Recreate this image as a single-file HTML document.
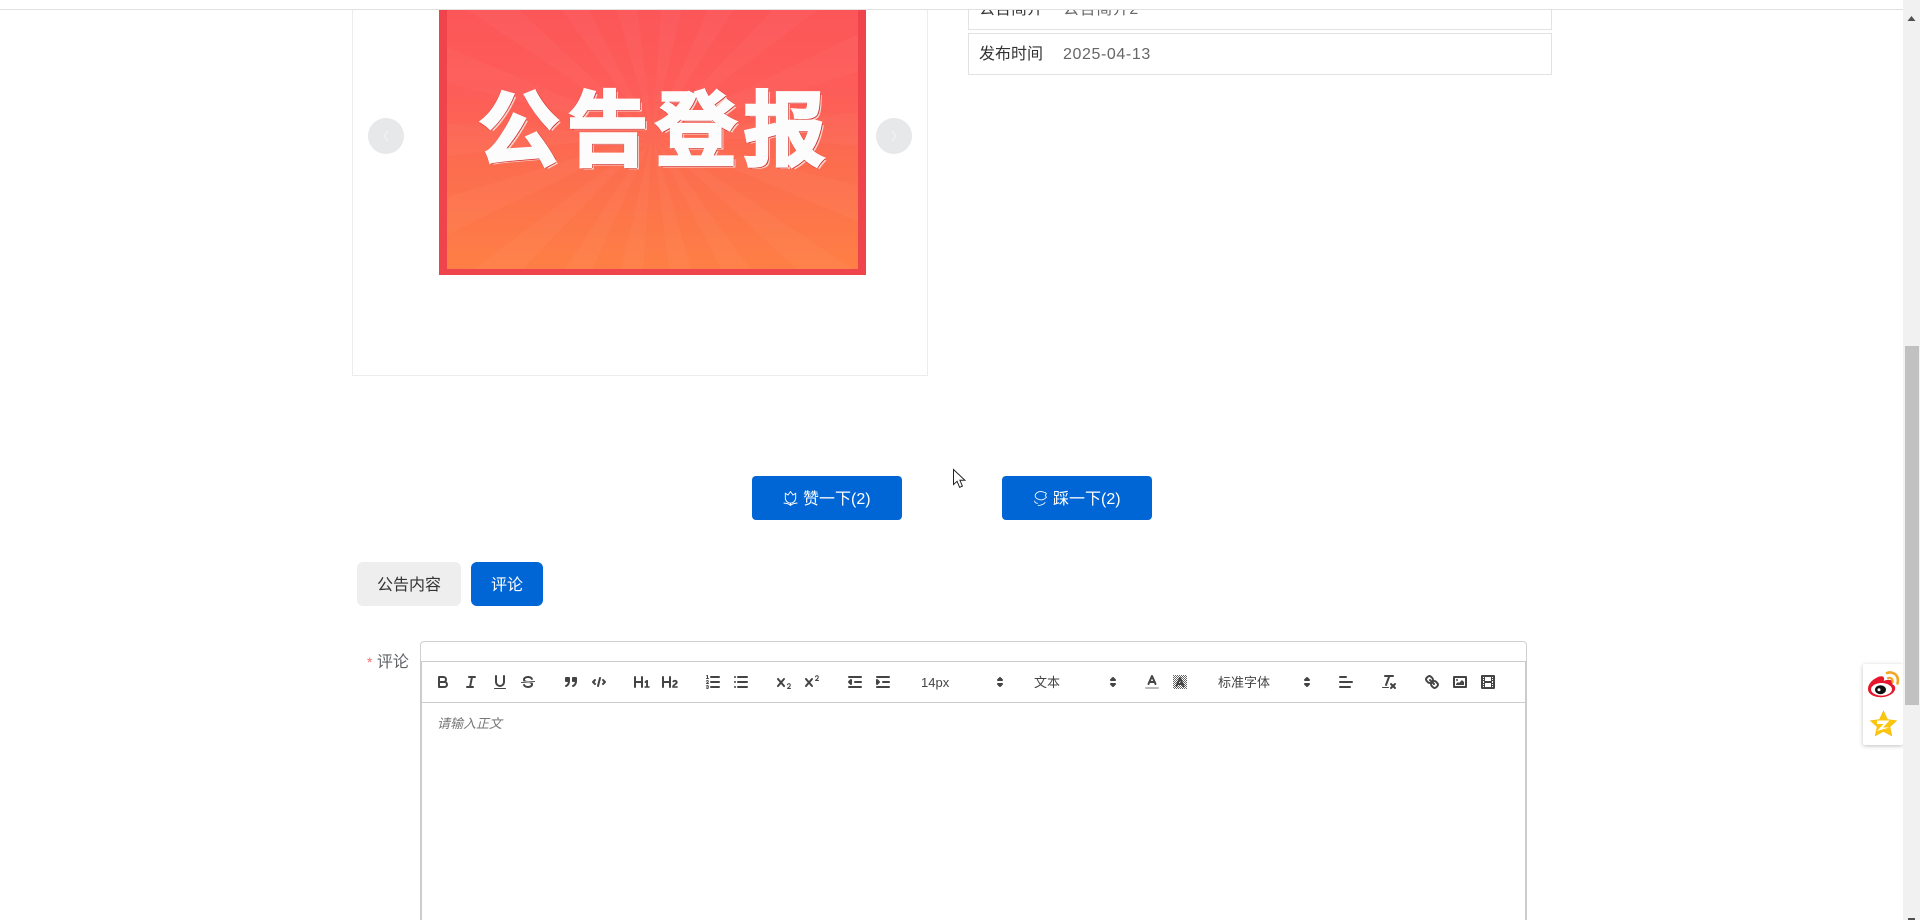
<!DOCTYPE html>
<html lang="zh-CN"><head><meta charset="utf-8"><title>公告详情</title>
<style>
html,body{margin:0;padding:0;width:1920px;height:920px;overflow:hidden;background:#fff;font-family:"Liberation Sans","Noto Sans CJK SC",sans-serif;color:#333}
#p{position:relative;width:1920px;height:920px;overflow:hidden;background:#fff}
.a{position:absolute;box-sizing:border-box}
.btn{background:#0066d6;border-radius:4px;color:#fff;font-size:16px;line-height:47px;height:44px;width:150px;top:476px}
.btn svg{position:absolute;left:31px;top:15px}
.btn span{position:absolute;left:51px;top:0;white-space:nowrap}
.row{left:968px;width:584px;border:1px solid #e2e2e2;font-size:16px;line-height:42px;height:42px}
.row b{position:absolute;left:10px;top:0;font-weight:400;color:#333}
.row i{position:absolute;left:94px;top:0;font-style:normal;color:#666;letter-spacing:.6px;white-space:nowrap}
.s{fill:none;stroke:#444;stroke-width:2;stroke-linecap:round;stroke-linejoin:round}
.t{fill:none;stroke:#444;stroke-width:1;stroke-linecap:round;stroke-linejoin:round}
.f{fill:#444}
.lb{font-size:13px;fill:#444;font-family:"Liberation Sans","Noto Sans CJK SC",sans-serif}
</style></head><body><div id="p">

<!-- carousel card -->
<div class="a" style="left:352px;top:-40px;width:576px;height:416px;border:1px solid #ececec"></div>
<div class="a" style="left:439px;top:0;width:427px;height:275px;background:#f0444c;overflow:hidden">
  <div class="a" style="left:8px;top:0;width:411px;height:269px;background:linear-gradient(180deg,#fc5559 0%,#fd5d58 35%,#fc6c4f 60%,#fe7f45 100%);overflow:hidden">
    <div class="a" style="left:-200px;top:-200px;width:811px;height:669px;background:repeating-conic-gradient(from 4deg at 50% 50%,rgba(255,255,255,.028) 0 9deg,rgba(255,255,255,0) 9deg 20deg)"></div>
  </div>
  <div class="a" style="left:39px;top:69px;width:370px;white-space:nowrap;font-family:'Noto Sans CJK SC','Liberation Sans',sans-serif;font-weight:700;font-size:82px;line-height:110px;letter-spacing:6.5px;color:#fcfcfc;-webkit-text-stroke:2.6px #fcfcfc;text-shadow:1px 1px 0 #d5302f,2px 1px 0 #d5302f,1px 2px 0 #d5302f,-1.5px -.5px 0 #d5302f,1.5px -1px 0 #d5302f,-1px 1.5px 0 #d5302f,3px 2.5px 0 #f8d5cb">公告登报</div>
</div>
<div class="a" style="left:368px;top:118px;width:36px;height:36px;border-radius:50%;background:#e6e8ea">
  <svg width="36" height="36" style="display:block"><path d="M20 13l-4 5 4 5" fill="none" stroke="#f2f3f4" stroke-width="1.2"/></svg></div>
<div class="a" style="left:876px;top:118px;width:36px;height:36px;border-radius:50%;background:#e6e8ea">
  <svg width="36" height="36" style="display:block"><path d="M16 13l4 5-4 5" fill="none" stroke="#f2f3f4" stroke-width="1.2"/></svg></div>

<!-- info rows -->
<div class="a row" style="top:-12px"><b>公告简介</b><i>公告简介2</i></div>
<div class="a row" style="top:33px;line-height:42.500px"><b>发布时间</b><i>2025-04-13</i></div>

<!-- top bar -->
<div class="a" style="left:0;top:0;width:1904px;height:10px;background:#fff;border-bottom:1px solid #e0e0e0"></div>

<!-- like buttons -->
<div class="a btn" style="left:752px"><svg width="15" height="15" viewBox="1 1 13 13" fill="none" stroke="#fff" stroke-width=".8"><path d="M3 3l2.300 1.500L7.500 1.500l2.200 3L12 3v4a4.500 4.500 0 0 1-9 0z"/><path d="M1.500 11.500c2.500 0 4.500.5 6 2 1.500-1.500 3.500-2 6-2M7.500 11.500v2"/></svg><span>赞一下(2)</span></div>
<div class="a btn" style="left:1002px"><svg width="15" height="15" viewBox="1.500 .500 12 14" fill="none" stroke="#fff" stroke-width=".8"><path d="M2.500 4.500C3 2.500 5 1 7.500 1c2.500 0 3.500 1 4.500 1l1 1-1 1.500 1 2-2 1.500c-1.500 1-4 1-6 0C3.500 7.500 2.500 6 2.500 4.500z"/><path d="M2 9.500c0 2 1.500 2.500 3 2.500M5 14c2 0 5-.5 7-3"/></svg><span>踩一下(2)</span></div>

<!-- tabs -->
<div class="a" style="left:357px;top:562px;width:104px;height:44px;border-radius:6px;background:#eee;font-size:16px;line-height:47px;text-align:center;color:#333">公告内容</div>
<div class="a" style="left:471px;top:562px;width:72px;height:44px;border-radius:6px;background:#0066d6;font-size:16px;line-height:47px;text-align:center;color:#fff">评论</div>

<!-- form label -->
<div class="a" style="left:367px;top:651px;font-size:16px;line-height:22px;color:#606266;white-space:nowrap"><span style="color:#f56c6c;font-size:14px">*</span> <span>评论</span></div>

<!-- editor -->
<div class="a" style="left:420px;top:641px;width:1107px;height:300px;border:1px solid #d0d0d0;border-radius:4px"></div>
<div class="a" style="left:420px;top:661px;width:1107px;height:300px;border:2px solid #ccc;border-top:1px solid #ccc"></div>
<div class="a" style="left:422px;top:702px;width:1103px;height:1px;background:#ccc"></div>
<div class="a" style="left:437px;top:715px;font-size:13px;line-height:18px;font-style:italic;color:#777;white-space:nowrap">请输入正文</div>

<svg class="a" style="left:0;top:0" width="1920" height="920" viewBox="0 0 1920 920">
<g transform="translate(434,673)"><path class="s" d="M5,4H9.5A2.5,2.5,0,0,1,12,6.5v0A2.5,2.5,0,0,1,9.5,9H5A0,0,0,0,1,5,9V4A0,0,0,0,1,5,4Z"/><path class="s" d="M5,9h5.5A2.5,2.5,0,0,1,13,11.5v0A2.5,2.5,0,0,1,10.5,14H5a0,0,0,0,1,0,0V9A0,0,0,0,1,5,9Z"/></g>
<g transform="translate(462,673)" class="s"><line x1="7" x2="13" y1="4" y2="4"/><line x1="5" x2="11" y1="14" y2="14"/><line x1="8" x2="10" y1="14" y2="4"/></g>
<g transform="translate(491,673)"><path class="s" d="M5,3V9a4.012,4.012,0,0,0,4,4H9a4.012,4.012,0,0,0,4-4V3"/><rect class="f" height="1" rx=".5" ry=".5" width="12" x="3" y="15"/></g>
<g transform="translate(519,673)"><line class="t" x1="15.5" x2="2.5" y1="8.5" y2="9.5"/><path class="f" d="M9.007,8C6.542,7.791,6,7.519,6,6.5,6,5.792,7.283,5,9,5c1.571,0,2.765.679,2.969,1.309a1,1,0,0,0,1.9-.617C13.356,4.106,11.354,3,9,3,6.2,3,4,4.538,4,6.5a3.2,3.2,0,0,0,.5,1.843Z"/><path class="f" d="M8.984,10C11.457,10.208,12,10.479,12,11.5c0,.708-1.283,1.5-3,1.5-1.571,0-2.765-.679-2.969-1.309a1,1,0,1,0-1.9.617C4.644,13.894,6.646,15,9,15c2.8,0,5-1.538,5-3.5a3.2,3.2,0,0,0-.5-1.843Z"/></g>
<g transform="translate(562,673)"><rect class="s" style="fill:#444" height="3" width="3" x="4" y="5"/><rect class="s" style="fill:#444" height="3" width="3" x="11" y="5"/><path class="s" d="M7,8c0,4.031-3,5-3,5"/><path class="s" d="M14,8c0,4.031-3,5-3,5"/></g>
<g transform="translate(590,673)" class="s"><polyline points="5 7 3 9 5 11"/><polyline points="13 7 15 9 13 11"/><line x1="10" x2="8" y1="5" y2="13"/></g>
<g transform="translate(633,673)"><path class="f" d="M10,4V14a1,1,0,0,1-2,0V10H3v4a1,1,0,0,1-2,0V4A1,1,0,0,1,3,4V8H8V4a1,1,0,0,1,2,0Zm6.06787,9.209H14.98975V7.59863a.54085.54085,0,0,0-.605-.54248h-.62744a1.01119,1.01119,0,0,0-.748.29688L11.645,8.56641a.5435.5435,0,0,0-.022.8584l.28613.30762a.53861.53861,0,0,0,.84717.0332l.09912-.08789a1.2137,1.2137,0,0,0,.2417-.35254h.02246s-.01123.30859-.01123.60547V13.209H12.041a.54085.54085,0,0,0-.605.54248v.43945a.54085.54085,0,0,0,.605.54248h4.02686a.54085.54085,0,0,0,.605-.54248v-.43945A.54085.54085,0,0,0,16.06787,13.209Z"/></g>
<g transform="translate(661,673)"><path class="f" d="M16.73975,13.81445v.43945a.54085.54085,0,0,1-.605.54248H11.855a.58392.58392,0,0,1-.64893-.60547V14.0127c0-2.90527,3.39941-3.42187,3.39941-4.55469a.77675.77675,0,0,0-.84717-.78125,1.17684,1.17684,0,0,0-.83594.38477c-.2749.26367-.561.374-.85791.13184l-.4292-.34082c-.30811-.24219-.38525-.51758-.1543-.81445a2.97155,2.97155,0,0,1,2.45361-1.17676,2.45393,2.45393,0,0,1,2.68408,2.40918c0,2.45312-3.1792,2.92676-3.27832,3.93848h2.79443A.54085.54085,0,0,1,16.73975,13.81445ZM9,3A.99974.99974,0,0,0,8,4V8H3V4A1,1,0,0,0,1,4V14a1,1,0,0,0,2,0V10H8v4a1,1,0,0,0,2,0V4A.99974.99974,0,0,0,9,3Z"/></g>
<g transform="translate(704,673)"><g class="s"><line x1="7" x2="15" y1="4" y2="4"/><line x1="7" x2="15" y1="9" y2="9"/><line x1="7" x2="15" y1="14" y2="14"/></g><line class="t" x1="2.5" x2="4.5" y1="5.5" y2="5.5"/><path class="f" d="M3.5,6A0.5,0.5,0,0,1,3,5.5V3.085l-0.276.138A0.5,0.5,0,0,1,2.053,3c-0.124-.247-0.023-0.324.224-0.447l1-.5A0.5,0.5,0,0,1,4,2.5v3A0.5,0.5,0,0,1,3.5,6Z"/><path class="t" d="M4.5,10.5h-2c0-.234,1.85-1.076,1.85-2.234A0.959,0.959,0,0,0,2.5,8.156"/><path class="t" d="M2.5,14.846a0.959,0.959,0,0,0,1.85-.109A0.7,0.7,0,0,0,3.75,14a0.688,0.688,0,0,0,.6-0.736,0.959,0.959,0,0,0-1.85-.109"/></g>
<g transform="translate(732,673)" class="s"><line x1="6" x2="15" y1="4" y2="4"/><line x1="6" x2="15" y1="9" y2="9"/><line x1="6" x2="15" y1="14" y2="14"/><line x1="3" x2="3" y1="4" y2="4"/><line x1="3" x2="3" y1="9" y2="9"/><line x1="3" x2="3" y1="14" y2="14"/></g>
<g transform="translate(775,673)" class="f"><path d="M15.5,15H13.861a3.858,3.858,0,0,0,1.914-2.975,1.8,1.8,0,0,0-1.6-1.751A1.921,1.921,0,0,0,12.021,11.7a0.50013,0.50013,0,1,0,.957.291h0a0.914,0.914,0,0,1,1.053-.725,0.81,0.81,0,0,1,.744.762c0,1.076-1.16971,1.86982-1.93971,2.43082A1.45639,1.45639,0,0,0,12,15.5a0.5,0.5,0,0,0,.5.5h3A0.5,0.5,0,0,0,15.5,15Z"/><path d="M9.65,5.241a1,1,0,0,0-1.409.108L6,7.964,3.759,5.349A1,1,0,0,0,2.192,6.59178Q2.21541,6.6213,2.241,6.649L4.684,9.5,2.241,12.35A1,1,0,0,0,3.71,13.70722q0.02557-.02768.049-0.05722L6,11.036,8.241,13.65a1,1,0,1,0,1.567-1.24277Q9.78459,12.3777,9.759,12.35L7.316,9.5,9.759,6.651A1,1,0,0,0,9.65,5.241Z"/></g>
<g transform="translate(803,673)" class="f"><path d="M15.5,7H13.861a4.015,4.015,0,0,0,1.914-2.975,1.8,1.8,0,0,0-1.6-1.751A1.922,1.922,0,0,0,12.021,3.7a0.5,0.5,0,1,0,.957.291,0.917,0.917,0,0,1,1.053-.725,0.81,0.81,0,0,1,.744.762c0,1.077-1.164,1.925-1.934,2.486A1.423,1.423,0,0,0,12,7.5a0.5,0.5,0,0,0,.5.5h3A0.5,0.5,0,0,0,15.5,7Z"/><path d="M9.651,5.241a1,1,0,0,0-1.41.108L6,7.964,3.759,5.349a1,1,0,1,0-1.519,1.3L4.683,9.5,2.241,12.35a1,1,0,1,0,1.519,1.3L6,11.036,8.241,13.65a1,1,0,0,0,1.519-1.3L7.317,9.5,9.759,6.651A1,1,0,0,0,9.651,5.241Z"/></g>
<g transform="translate(846,673)" class="s"><line x1="3" x2="15" y1="14" y2="14"/><line x1="3" x2="15" y1="4" y2="4"/><line x1="9" x2="15" y1="9" y2="9"/><polyline style="fill:#444" points="5 7 5 11 3 9 5 7"/></g>
<g transform="translate(874,673)" class="s"><line x1="3" x2="15" y1="14" y2="14"/><line x1="3" x2="15" y1="4" y2="4"/><line x1="9" x2="15" y1="9" y2="9"/><polyline style="fill:#444" points="3 7 3 11 5 9 3 7"/></g>
<text class="lb" x="921" y="687">14px</text>
<g transform="translate(991,673)" class="t" style="stroke-width:2"><polygon style="fill:#444" points="7 11 9 13 11 11 7 11"/><polygon style="fill:#444" points="7 7 9 5 11 7 7 7"/></g>
<text class="lb" x="1034" y="687">文本</text>
<g transform="translate(1104,673)" class="t" style="stroke-width:2"><polygon style="fill:#444" points="7 11 9 13 11 11 7 11"/><polygon style="fill:#444" points="7 7 9 5 11 7 7 7"/></g>
<g transform="translate(1143,673)"><line class="s" style="stroke:#bbb" x1="3" x2="15" y1="15" y2="15"/><polyline class="s" points="5.5 11 9 3 12.5 11"/><line class="s" x1="11.63" x2="6.38" y1="9" y2="9"/></g>
<defs><pattern id="dz" width="2" height="2" patternUnits="userSpaceOnUse"><rect width="1" height="1" fill="#333"/><rect x="1" y="1" width="1" height="1" fill="#333"/></pattern></defs>
<g transform="translate(1171,673)"><rect x="2" y="2" width="14" height="14" fill="url(#dz)" opacity=".75"/><polyline class="s" points="5.5 13 9 5 12.5 13"/><line class="s" x1="11.63" x2="6.38" y1="11" y2="11"/></g>
<text class="lb" x="1218" y="687">标准字体</text>
<g transform="translate(1298,673)" class="t" style="stroke-width:2"><polygon style="fill:#444" points="7 11 9 13 11 11 7 11"/><polygon style="fill:#444" points="7 7 9 5 11 7 7 7"/></g>
<g transform="translate(1337,673)" class="s"><line x1="3" x2="15" y1="9" y2="9"/><line x1="3" x2="13" y1="14" y2="14"/><line x1="3" x2="9" y1="4" y2="4"/></g>
<g transform="translate(1380,673)"><g class="s"><line x1="5" x2="13" y1="3" y2="3"/><line x1="6" x2="9.35" y1="12" y2="3"/><line x1="11" x2="15" y1="11" y2="15"/><line x1="15" x2="11" y1="11" y2="15"/></g><rect class="f" height="1" rx=".5" ry=".5" width="7" x="2" y="14"/></g>
<g transform="translate(1423,673)" class="s"><line x1="7" x2="11" y1="7" y2="11"/><path d="M8.9,4.577a3.476,3.476,0,0,1,.36,4.679A3.476,3.476,0,0,1,4.577,8.9C3.185,7.5,2.035,6.4,4.217,4.217S7.5,3.185,8.9,4.577Z"/><path d="M13.423,9.1a3.476,3.476,0,0,0-4.679-.36,3.476,3.476,0,0,0,.36,4.679c1.392,1.392,2.5,2.542,4.679.36S14.815,10.5,13.423,9.1Z"/></g>
<g transform="translate(1451,673)"><rect class="s" height="10" width="12" x="3" y="4"/><circle class="f" cx="6" cy="7" r="1"/><polyline class="f" points="5 12 5 11 7 9 8 10 11 7 13 9 13 12 5 12"/></g>
<g transform="translate(1479,673)"><rect class="s" height="12" width="12" x="3" y="3"/><g class="f"><rect height="12" width="1" x="5" y="3"/><rect height="12" width="1" x="12" y="3"/><rect height="2" width="8" x="5" y="8"/><rect height="1" width="3" x="3" y="5"/><rect height="1" width="3" x="3" y="7"/><rect height="1" width="3" x="3" y="10"/><rect height="1" width="3" x="3" y="12"/><rect height="1" width="3" x="12" y="5"/><rect height="1" width="3" x="12" y="7"/><rect height="1" width="3" x="12" y="10"/><rect height="1" width="3" x="12" y="12"/></g></g>

<!-- cursor -->
<path d="M953.500 469.500v15l3.600-3.200 2.500 6 2.800-1.200-2.500-5.800h5z" fill="#fff" stroke="#222" stroke-width="1"/>
</svg>

<!-- social panel -->
<div class="a" style="left:1863px;top:664px;width:40px;height:81px;background:#fff;box-shadow:0 1px 4px rgba(0,0,0,.25);border-radius:2px"></div>
<svg class="a" style="left:1863px;top:664px" width="40" height="81" viewBox="0 0 40 81">
  <path d="M5 25c0-5 4-9 9-11.500 3.500-1.800 6.500-1.500 7 .5.300 1 0 2-.3 3 3-1.500 7-1.800 8.500.200.600 1 .500 2 0 3 1.800.6 3 2 3 4 0 4.800-7 9-14.500 9C11 33.200 5 30 5 25z" fill="#e6162d"/>
  <ellipse cx="18.500" cy="25.300" rx="10.500" ry="6.300" fill="#fff"/>
  <ellipse cx="17.500" cy="25.700" rx="5.500" ry="4.500" fill="#111"/>
  <circle cx="16" cy="25.700" r="1.500" fill="#fff"/>
  <path d="M24 9c4.500-1.500 9 .5 10.500 4.500.6 2 .5 4 0 6" fill="none" stroke="#f5a623" stroke-width="2.600" stroke-linecap="round"/>
  <path d="M25 14c2.800-.8 5 1 4.600 4" fill="none" stroke="#f5a623" stroke-width="2.200" stroke-linecap="round"/>
  <path d="M20.500 47l4 8.500 9 1.200-6.600 6.100 1.800 9-8.200-4.500-8.200 4.500 1.800-9-6.600-6.100 9-1.200z" fill="#fcc60e" stroke="#f4b800" stroke-width=".6"/>
  <path d="M14 56.500h12.500l-6.500 7h6.500l-12.500 3.500 6.500-7h-6.500z" fill="#fff"/>
</svg>

<!-- scrollbar -->
<div class="a" style="left:1903px;top:0;width:17px;height:920px;background:#f1f1f1"></div>
<div class="a" style="left:1905px;top:346px;width:14px;height:359px;background:#c1c1c1"></div>
<svg class="a" style="left:1903px;top:0" width="17" height="920" viewBox="0 0 17 920">
  <path d="M8.500 16l4 5h-8z" fill="#505050"/>
  <rect x="5" y="918" width="7" height="2" fill="#505050"/>
</svg>
</div></body></html>
